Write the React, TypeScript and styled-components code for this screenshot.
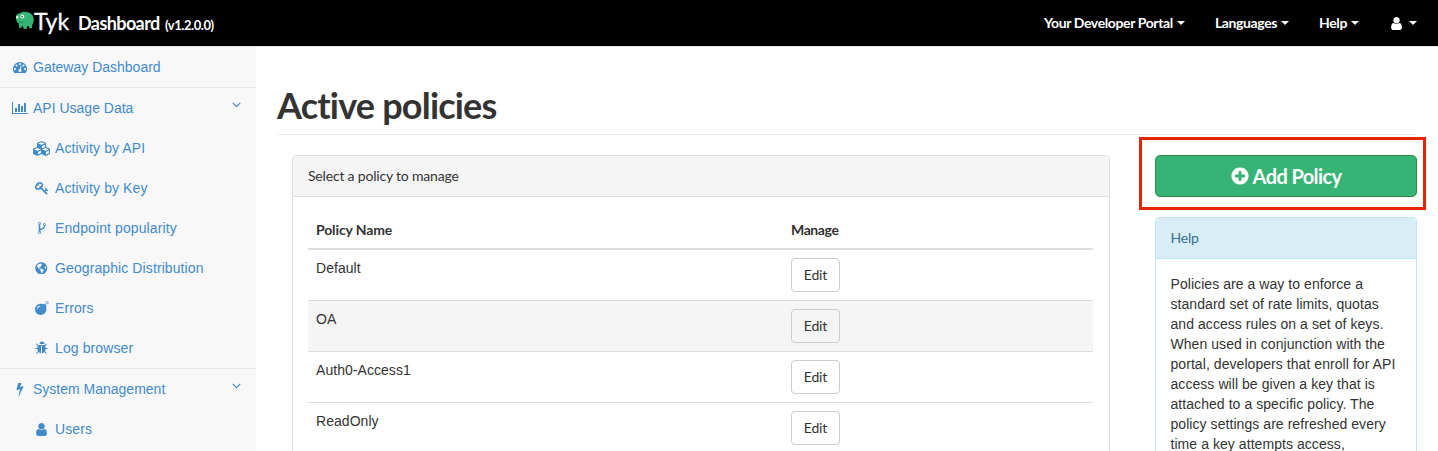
import React from "react";
import styled, { createGlobalStyle, css } from "styled-components";
import { FaBomb, FaCubes, FaGlobeAmericas } from "react-icons/fa";

const display = css`
  font-family: Lato, "Liberation Sans", sans-serif;
`;

const GlobalStyle = createGlobalStyle`
  * { box-sizing: border-box; }
  html, body { margin: 0; height: 100%; overflow: hidden; }
  body {
    background: #fff;
    color: #333;
    font: 14px/20px "Liberation Sans", Arial, sans-serif;
  }
`;

const Page = styled.div`
  height: 451px;
  overflow: hidden;
  display: flex;
  flex-direction: column;
`;

/* ---------- top bar ---------- */

const TopBar = styled.header`
  ${display}
  flex: none;
  height: 47px;
  padding: 0 21px 0 15px;
  display: flex;
  align-items: center;
  justify-content: space-between;
  background: #000;
  border-bottom: 1px solid #e7e7e7;
  color: #fff;
`;

const Brand = styled.div`
  display: flex;
  align-items: baseline;
  white-space: nowrap;
  height: 46px;
  line-height: 42px;
`;

const Mascot = styled.svg`
  width: 19px;
  height: 19px;
  align-self: flex-start;
  margin-top: 11px;
`;

const Wordmark = styled.span`
  width: 44px;
  font-size: 23px;
  -webkit-text-stroke: 0.3px #fff;
`;

const Product = styled.span`
  width: 87px;
  font-size: 18px;
  font-weight: 700;
  letter-spacing: -0.6px;
`;

const Version = styled.span`
  font-size: 13px;
  font-weight: 700;
  letter-spacing: -0.45px;
`;

const Menu = styled.nav`
  display: flex;
  align-items: center;
  gap: 30px;
  height: 42px;
`;

const MenuItem = styled.a<{ $gap?: number }>`
  display: flex;
  align-items: center;
  gap: ${(p) => p.$gap ?? 4}px;
  font-size: 14px;
  font-weight: 700;
  letter-spacing: -0.38px;
  white-space: nowrap;
`;

const Caret = styled.i`
  border: 4px solid transparent;
  border-top-color: currentColor;
  border-bottom: 0;
`;

/* ---------- sidebar ---------- */

const Body = styled.div`
  flex: 1;
  min-height: 0;
  display: flex;
`;

const Sidebar = styled.aside`
  flex: none;
  width: 256px;
  background: #f8f8f8;
  color: #428bca;
`;

const Section = styled.div`
  & + & {
    border-top: 1px solid #e7e7e7;
  }
`;

const NavRow = styled.a<{ $child?: boolean }>`
  display: flex;
  align-items: center;
  height: 40px;
  padding: 0 15px 0 ${(p) => (p.$child ? 32 : 10)}px;
  letter-spacing: ${(p) => (p.$child ? 0.1 : 0)}px;
`;

const IconSlot = styled.span<{ $child?: boolean }>`
  display: flex;
  align-items: center;
  justify-content: center;
  width: ${(p) => (p.$child ? 19 : 19)}px;
  margin-right: 4px;
`;

const NavText = styled.span`
  flex: 1;
  white-space: nowrap;
`;

const Chevron = styled.svg`
  width: 9px;
  height: 6px;
  margin-bottom: 6px;
  fill: none;
  stroke: currentColor;
  stroke-width: 1.1;
`;

/* ---------- content ---------- */

const Main = styled.main`
  flex: 1;
  padding: 0 21px;
`;

const Title = styled.h1`
  ${display}
  height: 88px;
  margin: 0 0 20px;
  padding-top: 38px;
  border-bottom: 1px solid #eee;
  font-size: 36px;
  line-height: 40px;
  font-weight: 700;
  letter-spacing: -0.8px;
`;

const Columns = styled.div`
  display: flex;
  align-items: flex-start;
  gap: 45px;
  padding-left: 15px;
`;

const Panel = styled.section<{ $info?: boolean }>`
  flex: ${(p) => (p.$info ? "none" : "1")};
  height: ${(p) => (p.$info ? 320 : 380)}px;
  border: 1px solid ${(p) => (p.$info ? "#bce8f1" : "#ddd")};
  border-radius: 4px;
  overflow: hidden;
`;

const PanelHead = styled.div<{ $info?: boolean }>`
  ${display}
  height: 41px;
  padding: 10px ${(p) => (p.$info ? 14.5 : 15)}px;
  line-height: 20px;
  background: ${(p) => (p.$info ? "#d9edf7" : "#f5f5f5")};
  border-bottom: 1px solid ${(p) => (p.$info ? "#bce8f1" : "#ddd")};
  color: ${(p) => (p.$info ? "#31708f" : "#333")};
  letter-spacing: -0.19px;
`;

const PanelBody = styled.div<{ $info?: boolean }>`
  padding: 15px ${(p) => (p.$info ? 14.5 : 15)}px;
`;

const Table = styled.table`
  width: 785px;
  border-collapse: separate;
  border-spacing: 0;
  table-layout: fixed;
`;

const Th = styled.th<{ $tracking: number }>`
  ${display}
  height: 38px;
  padding: 8px;
  border-bottom: 2px solid #ddd;
  text-align: left;
  letter-spacing: ${(p) => p.$tracking}px;
`;

const Row = styled.tr<{ $shaded?: boolean }>`
  background: ${(p) => (p.$shaded ? "#f5f5f5" : "#fff")};
`;

const Td = styled.td`
  height: 51px;
  padding: 8px;
  vertical-align: top;
  border-bottom: 1px solid #ddd;
  letter-spacing: 0.05px;
`;

const EditButton = styled.button<{ $shaded?: boolean }>`
  ${display}
  display: block;
  width: 49px;
  height: 34px;
  padding: 0;
  border: 1px solid #ccc;
  border-radius: 4px;
  background: ${(p) => (p.$shaded ? "#f5f5f5" : "#fff")};
  color: #333;
  font-size: 14px;
  line-height: 20px;
  letter-spacing: -0.15px;
`;

const Side = styled.div`
  width: 262px;
  display: flex;
  flex-direction: column;
  gap: 20px;
`;

const Highlight = styled.div`
  position: relative;
  &::after {
    content: "";
    position: absolute;
    inset: -18px -9px -13px -16px;
    border: 3px solid #e42500;
  }
`;

const AddButton = styled.button`
  ${display}
  width: 100%;
  height: 42px;
  padding: 0 1px 0 0;
  display: flex;
  align-items: center;
  justify-content: center;
  gap: 3px;
  border: 1px solid #2f8a3f;
  border-radius: 5px;
  background: #36b475;
  color: #fff;
  font-size: 20px;
  font-weight: 700;
  letter-spacing: -0.6px;
`;

const HelpText = styled.p`
  margin: 0;
  white-space: nowrap;
  letter-spacing: 0.06px;
`;

const glyphs = {
  gauge:
    "M384 1152q0-53-37.500-90.500t-90.500-37.500-90.500 37.500-37.500 90.500 37.500 90.500 90.500 37.500 90.500-37.500 37.500-90.500zm192-448q0-53-37.500-90.500t-90.500-37.500-90.500 37.500-37.500 90.500 37.500 90.500 90.500 37.500 90.500-37.500 37.500-90.500zm428 481l101-382q6-26-7.500-48.500t-38.500-29.500-48 6.500-30 39.500l-101 382q-60 5-107 43.500t-63 98.500q-20 77 20 146t117 89 146-20 89-117q16-60-6-117t-72-91zm660-33q0-53-37.500-90.500t-90.500-37.500-90.500 37.500-37.500 90.500 37.500 90.500 90.500 37.500 90.500-37.500 37.500-90.500zm-640-640q0-53-37.500-90.500t-90.500-37.500-90.500 37.500-37.500 90.500 37.500 90.500 90.500 37.500 90.500-37.500 37.500-90.500zm448 192q0-53-37.500-90.500t-90.500-37.500-90.500 37.500-37.500 90.500 37.500 90.500 90.500 37.500 90.500-37.500 37.500-90.500zm320 448q0 261-141 483-19 29-54 29h-1402q-35 0-54-29-141-221-141-483 0-182 71-348t191-286 286-191 348-71 348 71 286 191 191 286 71 348z",
  chart:
    "M640 896v512h-256v-512h256zm384-512v1024h-256v-1024h256zm1024 1152v128h-2048v-1536h128v1408h1920zm-640-896v768h-256v-768h256zm384-384v1152h-256v-1152h256z",
  key: "M832 512q0-80-56-136t-136-56-136 56-56 136q0 42 19 83-41-19-83-19-80 0-136 56t-56 136 56 136 136 56 136-56 56-136q0-42-19-83 41 19 83 19 80 0 136-56t56-136zm851 704q0 17-49 66t-66 49q-9 0-28.500-16t-36.500-33-38.500-40-24.500-26l-96 96 220 220q28 28 28 68 0 42-39 81t-81 39q-40 0-68-28l-671-671q-176 131-365 131-163 0-265.500-102.500t-102.500-265.500q0-160 95-313t248-248 313-95q163 0 265.500 102.500t102.500 265.500q0 189-131 365l355 355 96-96q-3-3-26-24.500t-40-38.500-33-36.500-16-28.500q0-17 49-66t66-49q13 0 23 10 6 6 46 44.500t82 79.500 86.500 86 73 78 28.500 41z",
  fork: "M672 1472q0-40-28-68t-68-28-68 28-28 68 28 68 68 28 68-28 28-68zm0-1152q0-40-28-68t-68-28-68 28-28 68 28 68 68 28 68-28 28-68zm640 128q0-40-28-68t-68-28-68 28-28 68 28 68 68 28 68-28 28-68zm96 0q0 52-26 96.500t-70 69.500q-2 287-226 414-67 38-203 81-128 40-169.500 71t-41.500 100v26q44 25 70 69.500t26 96.500q0 80-56 136t-136 56-136-56-56-136q0-52 26-96.500t70-69.500v-820q-44-25-70-69.500t-26-96.500q0-80 56-136t136-56 136 56 56 136q0 52-26 96.500t-70 69.500v497q54-26 154-57 55-17 87.500-29.500t70.500-31 59-39.500 40.500-51 28-69.500 8.500-91.500q-44-25-70-69.500t-26-96.500q0-80 56-136t136-56 136 56 56 136z",
  bug: "M1632 960q0 26-19 45t-45 19h-224q0 171-67 290l208 209q19 19 19 45t-19 45q-18 19-45 19t-45-19l-198-197q-5 5-15 13t-42 28.500-65 36.500-82 29-97 13v-896h-128v896q-51 0-101.500-13.500t-87-33-66-39-43.500-32.500l-15-14-183 207q-20 21-48 21-24 0-43-16-19-18-20.500-44.500t15.500-46.500l202-227q-58-114-58-274h-224q-26 0-45-19t-19-45 19-45 45-19h224v-294l-173-173q-19-19-19-45t19-45 45-19 45 19l173 173h844l173-173q19-19 45-19t45 19 19 45-19 45l-173 173v294h224q26 0 45 19t19 45zm-416-576h-640q0-133 93.500-226.500t226.500-93.500 226.500 93.500 93.500 226.500z",
  bolt: "M1333 566q18 20 7 44l-540 1157q-13 25-42 25-4 0-14-2-17-5-25.500-19t-4.500-30l197-808-406 101q-4 1-12 1-18 0-31-11-18-15-13-39l201-825q4-14 16-23t28-9h328q19 0 32 12.500t13 29.500q0 8-5 18l-171 463 396-98q8-2 12-2 19 0 34 15z",
  user: "M1536 1399q0 109-62.500 187t-150.500 78h-854q-88 0-150.500-78t-62.500-187q0-85 8.500-160.500t31.500-152 58.500-131 94-89 134.500-34.500q131 128 313 128t313-128q76 0 134.500 34.500t94 89 58.500 131 31.500 152 8.500 160.500zm-256-887q0 159-112.500 271.500t-271.500 112.500-271.500-112.500-112.500-271.500 112.500-271.500 271.500-112.500 271.500 112.500 112.500 271.500z",
  plus: "M1344 960v-128q0-26-19-45t-45-19h-256v-256q0-26-19-45t-45-19h-128q-26 0-45 19t-19 45v256h-256q-26 0-45 19t-19 45v128q0 26 19 45t45 19h256v256q0 26 19 45t45 19h128q26 0 45-19t19-45v-256h256q26 0 45-19t19-45zm320-64q0 209-103 385.500t-279.500 279.500-385.500 103-385.500-103-279.500-279.500-103-385.500 103-385.500 279.500-279.500 385.500-103 385.500 103 279.500 279.500 103 385.500z",
};

function Glyph({ name, size = 14 }: { name: keyof typeof glyphs; size?: number }) {
  const units = name === "chart" ? 2048 : 1792;
  return (
    <svg
      width={(size * units) / 1792}
      height={size}
      viewBox={`0 0 ${units} 1792`}
      fill="currentColor"
    >
      <path d={glyphs[name]} />
    </svg>
  );
}

const apiLinks: [React.ReactNode, string][] = [
  [<FaCubes size={17} />, "Activity by API"],
  [<Glyph name="key" />, "Activity by Key"],
  [<Glyph name="fork" />, "Endpoint popularity"],
  [<FaGlobeAmericas size={12.5} />, "Geographic Distribution"],
  [<FaBomb size={14} />, "Errors"],
  [<Glyph name="bug" />, "Log browser"],
];

function NavHeading({ icon, label, open }: { icon: React.ReactNode; label: string; open?: boolean }) {
  return (
    <NavRow>
      <IconSlot>{icon}</IconSlot>
      <NavText>{label}</NavText>
      {open && (
        <Chevron viewBox="0 0 9 6">
          <path d="M0.7 0.8 4.500 4.600 8.300 0.800" />
        </Chevron>
      )}
    </NavRow>
  );
}

function NavChild({ icon, label }: { icon: React.ReactNode; label: string }) {
  return (
    <NavRow $child>
      <IconSlot $child>{icon}</IconSlot>
      <NavText>{label}</NavText>
    </NavRow>
  );
}

const policies = ["Default", "OA", "Auth0-Access1", "ReadOnly"];

const help = [
  "Policies are a way to enforce a",
  "standard set of rate limits, quotas",
  "and access rules on a set of keys.",
  "When used in conjunction with the",
  "portal, developers that enroll for API",
  "access will be given a key that is",
  "attached to a specific policy. The",
  "policy settings are refreshed every",
  "time a key attempts access,",
];

export default function App() {
  return (
    <Page>
      <GlobalStyle />
      <TopBar>
        <Brand>
          <Mascot viewBox="0 0 19 19">
            <path
              d="M1 6C1 3.500 2.500 2.200 4.500 2.400 6.500 0.600 10 0.200 13 1.200 16.500 2.300 18.700 5 18.700 8.500 18.700 10.800 18.200 12.300 17.300 13.500L17 16.800Q15.800 18 14.300 17.200L13.800 15 12 15.300 11.800 17.500Q10.200 18.600 8.500 17.600L8 15.500 6.800 15 6.500 16.800Q5 17.300 4 16.200L3.600 12.600C1.800 11.600 0.800 9 1 6Z"
              fill="#36b475"
            />
            <path d="M3.800 11Q6 12.300 8.500 10.800" fill="none" stroke="#20804f" strokeWidth="0.8" />
            <circle cx="7.300" cy="5.500" r="2" fill="#e4f6ec" />
            <circle cx="7" cy="5.600" r="0.800" fill="#1d5b3c" />
            <circle cx="2.200" cy="6.300" r="1.200" fill="#e4f6ec" />
          </Mascot>
          <Wordmark>Tyk</Wordmark>
          <Product>Dashboard</Product>
          <Version>(v1.2.0.0)</Version>
        </Brand>
        <Menu>
          <MenuItem>Your Developer Portal<Caret /></MenuItem>
          <MenuItem>Languages<Caret /></MenuItem>
          <MenuItem>Help<Caret /></MenuItem>
          <MenuItem $gap={5}><Glyph name="user" size={15} /><Caret /></MenuItem>
        </Menu>
      </TopBar>
      <Body>
        <Sidebar>
          <Section>
            <NavHeading icon={<Glyph name="gauge" />} label="Gateway Dashboard" />
          </Section>
          <Section>
            <NavHeading icon={<Glyph name="chart" />} label="API Usage Data" open />
            {apiLinks.map(([icon, label]) => (
              <NavChild key={label} icon={icon} label={label} />
            ))}
          </Section>
          <Section>
            <NavHeading icon={<Glyph name="bolt" />} label="System Management" open />
            <NavChild icon={<Glyph name="user" size={15} />} label="Users" />
          </Section>
        </Sidebar>
        <Main>
          <Title>Active policies</Title>
          <Columns>
            <Panel>
              <PanelHead>Select a policy to manage</PanelHead>
              <PanelBody>
                <Table>
                  <colgroup>
                    <col width="475" />
                    <col />
                  </colgroup>
                  <thead>
                    <tr>
                      <Th $tracking={-0.13}>Policy Name</Th>
                      <Th $tracking={-0.4}>Manage</Th>
                    </tr>
                  </thead>
                  <tbody>
                    {policies.map((name, i) => (
                      <Row key={name} $shaded={i === 1}>
                        <Td>{name}</Td>
                        <Td>
                          <EditButton $shaded={i === 1}>Edit</EditButton>
                        </Td>
                      </Row>
                    ))}
                  </tbody>
                </Table>
              </PanelBody>
            </Panel>
            <Side>
              <Highlight>
                <AddButton>
                  <Glyph name="plus" size={20} />
                  Add Policy
                </AddButton>
              </Highlight>
              <Panel $info>
                <PanelHead $info>Help</PanelHead>
                <PanelBody $info>
                  {help.map((line) => (
                    <HelpText key={line}>{line}</HelpText>
                  ))}
                </PanelBody>
              </Panel>
            </Side>
          </Columns>
        </Main>
      </Body>
    </Page>
  );
}
